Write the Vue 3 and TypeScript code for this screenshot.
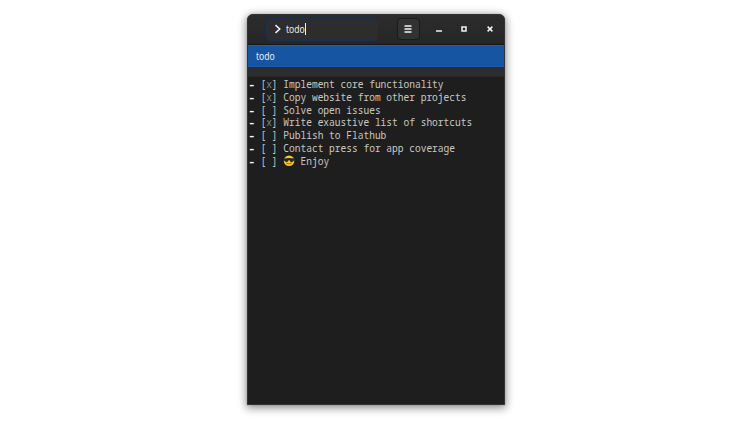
<script setup lang="ts">
import { ref } from 'vue'

interface Task {
  done: boolean
  text: string
  cool?: boolean
}

const query = ref<string>('todo')
const tasks: Task[] = [
  { done: true, text: 'Implement core functionality' },
  { done: true, text: 'Copy website from other projects' },
  { done: false, text: 'Solve open issues' },
  { done: true, text: 'Write exaustive list of shortcuts' },
  { done: false, text: 'Publish to Flathub' },
  { done: false, text: 'Contact press for app coverage' },
  { done: false, text: 'Enjoy', cool: true },
]
</script>

<template>
  <main class="desktop">
    <section class="window">
      <header class="titlebar">
        <div class="entry">
          <svg class="chevron" viewBox="0 0 8 10"><path d="M1.5 1.2 5.7 5 1.5 8.8" /></svg>
          <span class="label">{{ query }}</span><i class="caret"></i>
        </div>
        <button class="menu" aria-label="Menu">
          <svg viewBox="0 0 8 8"><path d="M.5 1h7M.5 4h7M.5 7h7" /></svg>
        </button>
        <div class="controls">
          <svg viewBox="0 0 8 8"><path d="M1 6h6" /></svg>
          <svg viewBox="0 0 8 8"><path d="M2 2h4v4H2z" /></svg>
          <svg viewBox="0 0 8 8"><path d="m1.6 1.6 4.8 4.8m0-4.8L1.6 6.4" /></svg>
        </div>
      </header>
      <div class="result"><span class="label">{{ query }}</span></div>
      <div class="divider"></div>
      <div class="editor">
        <div v-for="task in tasks" :key="task.text" class="line">
          <b>-</b> <span class="box">[<span class="mark">{{ task.done ? 'x' : ' ' }}</span>]</span> <svg v-if="task.cool" class="emoji" viewBox="0 0 12 12" preserveAspectRatio="none">
            <circle cx="6" cy="6" r="5.5" fill="#fdc91f" />
            <path d="M.4 3.6Q6 2.8 11.6 3.6L11.3 5.4Q10.6 7.4 8.6 7.3 6.8 7.1 6.3 5.1H5.7Q5.2 7.1 3.4 7.3 1.4 7.4.7 5.4z" fill="#282725" />
            <path d="M3.3 8.6Q6 10.5 8.9 8.2" fill="none" stroke="#6b4a16" stroke-width=".8" stroke-linecap="round" />
          </svg>{{ task.text }}
        </div>
      </div>
    </section>
  </main>
</template>

<style>
body {
  background: #fff;
  overflow: hidden;
}
</style>

<style scoped>
.desktop {
  height: 423px;
  box-sizing: border-box;
  padding-top: 14px;
  display: flex;
  justify-content: center;
  align-items: flex-start;
}
.window {
  width: 258px;
  height: 391px;
  box-sizing: border-box;
  border: 1px solid #353333;
  border-radius: 6px 6px 0 0;
  overflow: hidden;
  background: #1e1e1e;
  box-shadow: 0 2px 8px 1px rgba(0, 0, 0, .45), 0 0 1px rgba(0, 0, 0, .5);
  display: flex;
  flex-direction: column;
  font-family: 'Noto Sans', sans-serif;
  color: #eee;
}
.titlebar {
  height: 30px;
  flex: none;
  box-sizing: border-box;
  padding: 0 5px 1px 18px;
  display: flex;
  align-items: center;
  background: linear-gradient(#2c2c2c, #262626);
  border-bottom: 1px solid #181512;
}
.entry {
  width: 112px;
  height: 23px;
  box-sizing: border-box;
  border: 1px solid #1b2f50;
  border-radius: 4px;
  background: #2d2d2d;
  display: flex;
  align-items: center;
  padding-left: 7px;
  font-size: 10px;
}
.label {
  display: inline-block;
  width: 19px;
  transform: scaleX(.86);
  transform-origin: left;
}
.chevron {
  width: 8px;
  height: 10px;
  margin-right: 4px;
  fill: none;
  stroke: #eee;
  stroke-width: 1.6;
}
.caret {
  width: 1px;
  height: 12px;
  background: #eee;
}
.menu {
  width: 23px;
  height: 22px;
  margin-left: 18.5px;
  padding: 0;
  border: 1px solid #1b1b1b;
  border-radius: 4px;
  background: #323232;
  display: flex;
  align-items: center;
  justify-content: center;
}
.menu svg,
.controls svg {
  width: 8px;
  height: 8px;
  fill: none;
  stroke: #f2f2f2;
  stroke-width: 1.5;
}
.controls {
  flex: 1;
  display: flex;
  justify-content: space-between;
  padding: 0 5.5px 0 15px;
}
.result {
  height: 22px;
  flex: none;
  box-sizing: border-box;
  border-top: 1px solid #1b62b9;
  border-bottom: 1px solid #1b5db0;
  background: #1655a2;
  padding-left: 8px;
  line-height: 20px;
  font-size: 10px;
}
.divider {
  height: 10px;
  flex: none;
  box-sizing: border-box;
  background: #2d2d2d;
  border-bottom: 1px solid #252525;
}
.editor {
  padding: 1px 0 0 1px;
  font: 10px/12.75px 'Noto Sans Mono', 'DejaVu Sans Mono', monospace;
  color: #c9c9c0;
  transform: scaleX(.954);
  transform-origin: left;
}
.line {
  height: 12.75px;
  white-space: pre;
}
.line b {
  display: inline-block;
  color: #fff;
  transform: scaleX(1.3);
}
.box {
  color: #b5cbc8;
}
.mark {
  color: #888;
}
.emoji {
  width: 12.1px;
  height: 11.5px;
  margin-right: 6px;
  vertical-align: -2.3px;
}
</style>
